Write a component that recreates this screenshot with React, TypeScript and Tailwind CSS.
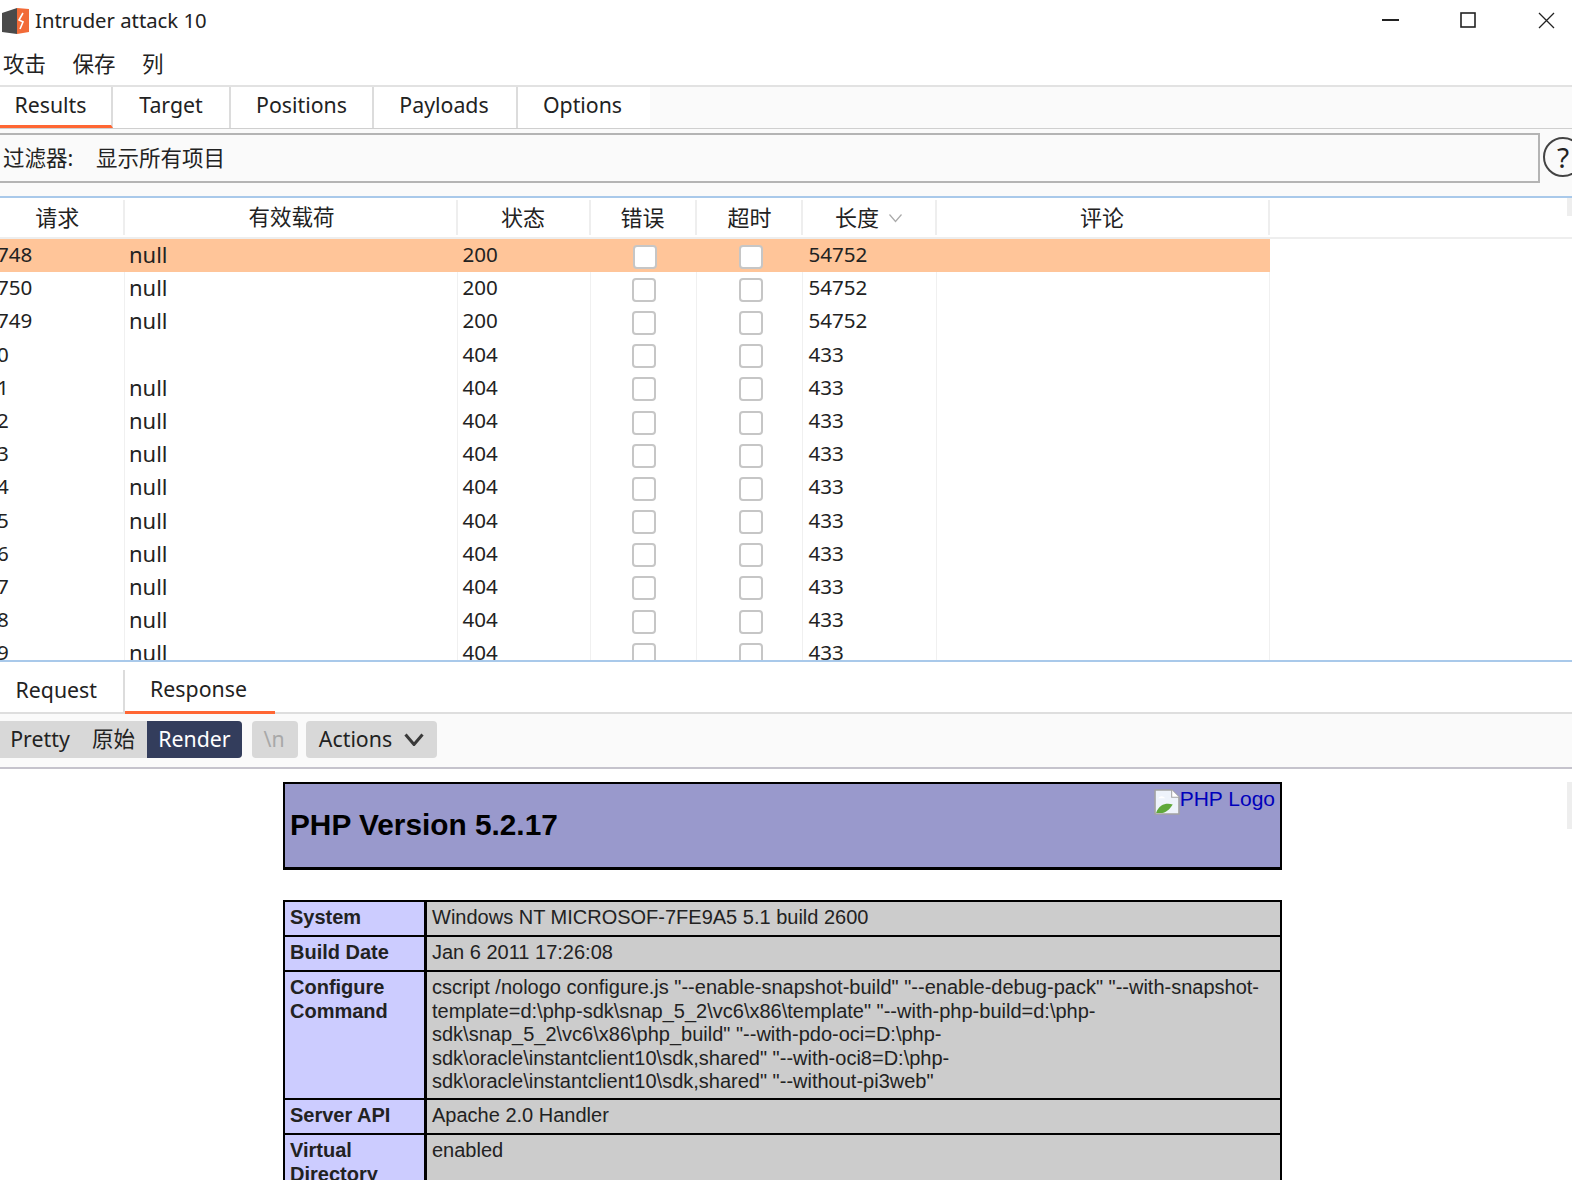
import React from 'react';

const sans = 'font-["Noto_Sans","Noto_Sans_CJK_SC",sans-serif]';
const COLS = 'grid grid-cols-[124.5px_333px_133px_106px_106px_134px_333px] w-[1269.5px]';

const rows = [
  { id: '748', payload: 'null', status: '200', len: '54752', active: true },
  { id: '750', payload: 'null', status: '200', len: '54752' },
  { id: '749', payload: 'null', status: '200', len: '54752' },
  { id: '0', payload: '', status: '404', len: '433' },
  { id: '1', payload: 'null', status: '404', len: '433' },
  { id: '2', payload: 'null', status: '404', len: '433' },
  { id: '3', payload: 'null', status: '404', len: '433' },
  { id: '4', payload: 'null', status: '404', len: '433' },
  { id: '5', payload: 'null', status: '404', len: '433' },
  { id: '6', payload: 'null', status: '404', len: '433' },
  { id: '7', payload: 'null', status: '404', len: '433' },
  { id: '8', payload: 'null', status: '404', len: '433' },
  { id: '9', payload: 'null', status: '404', len: '433' },
];

const AppLogo = () => (
  <svg width="30" height="28" viewBox="0 0 30 28">
    <path d="M2 6 L17 1 V27 L2 25 Z" fill="#4a4a4a" />
    <path d="M17 1 L29 2 V25 L17 27 Z" fill="#f26b38" />
    <path d="M23 6 L19 13 L23 15 L20 22" fill="none" stroke="#fff" strokeWidth="1.6" />
  </svg>
);

const BrokenImage = () => (
  <svg width="26" height="26" viewBox="0 0 25 25" className="shrink-0">
    <path d="M1 1 H17 L24 8 V24 H1 Z" fill="#eef3fb" stroke="#a3a3a3" strokeWidth="1.5" />
    <path d="M17 1 V8 H24" fill="#fff" stroke="#a3a3a3" />
    <path d="M2 23 C5 14 13 13 18 15 C15 20 11 23 8 23 Z" fill="#5fa83a" />
    <path d="M4 9 Q7 5 11 9 Z" fill="#fff" />
  </svg>
);

const Chevron = ({ w, h, stroke, color }: { w: number; h: number; stroke: number; color: string }) => (
  <svg width={w} height={h} viewBox={`0 0 ${w} ${h}`} fill="none" stroke={color} strokeWidth={stroke}>
    <path d={`M1.5 1.5 L${w / 2} ${h - 1.5} L${w - 1.5} 1.5`} />
  </svg>
);

const Check = () => (
  <div className="w-[24px] h-[24px] mt-[2px] rounded-[4px] bg-white border-2 border-[#c6c6c6]" />
);

const Tab = ({ label, width, active, extra }: { label: string; width: string; active?: boolean; extra?: string }) => (
  <div className={`${width} h-full flex items-center justify-center border-r-2 border-[#dcdcdc] bg-white ${extra ?? ''} ${active ? 'pb-[3px] border-b-[3px] border-b-[#ff6633]' : 'pb-[5px]'}`}>
    {label}
  </div>
);

const InfoRow = ({ label, height, children }: { label: React.ReactNode; height: string; children: React.ReactNode }) => (
  <div className={`flex ${height} border-b-[2px] border-black`}>
    <div className="w-[142px] shrink-0 bg-[#ccccff] border-r-[3px] border-black px-[5px] pt-[4px] font-bold leading-[23.5px]">{label}</div>
    <div className="flex-1 bg-[#cccccc] px-[5px] pt-[4px] leading-[23.5px]">{children}</div>
  </div>
);

export default function App() {
  return (
    <div className={`w-[1572px] h-[1180px] overflow-hidden bg-white text-[#222] text-[21.3px] ${sans}`}>
      {/* Title bar */}
      <div className="h-[42px] flex items-center">
        <AppLogo />
        <span className="ml-[5px] text-[20.3px] pb-[2px]">Intruder attack 10</span>
        <div className="ml-auto flex items-center pb-[2px]">
          <svg width="17" height="2" className="mr-[61px]"><rect width="17" height="2" fill="#222" /></svg>
          <svg width="16" height="16" className="mr-[62px]"><rect x="1" y="1" width="14" height="14" fill="none" stroke="#222" strokeWidth="1.6" /></svg>
          <svg width="17" height="17" className="mr-[17px]" stroke="#222" strokeWidth="1.3"><path d="M1 1 L16 16 M16 1 L1 16" /></svg>
        </div>
      </div>

      {/* Menu */}
      <div className="h-[43px] flex items-center pl-[3px] gap-[26.5px] text-[21.5px] pt-[1px]">
        <span>攻击</span>
        <span>保存</span>
        <span>列</span>
      </div>

      {/* Main tabs */}
      <div className="h-[44px] flex bg-[#fafafa] border-t-2 border-b border-t-[#e2e2e2] border-b-[#cfcfcf]">
        <Tab label="Results" width="w-[113px]" extra="pr-[10px]" active />
        <Tab label="Target" width="w-[118px]" />
        <Tab label="Positions" width="w-[143px]" />
        <Tab label="Payloads" width="w-[144px]" extra="pr-[2px]" />
        <div className="w-[132px] bg-white flex items-center justify-center pb-[5px] pr-[3px]">Options</div>
      </div>

      {/* Filter */}
      <div className="h-[69px] bg-[#fafafa] flex pt-[4px] border-b-2 border-b-[#a9c9ea]">
        <div className="w-[1540px] shrink-0 h-[50px] border-2 border-l-0 border-[#b4b4b4] flex items-center pl-[3px] text-[21.5px]">
          <span className="w-[93px]">过滤器:</span>
          <span>显示所有项目</span>
        </div>
        <div className="ml-[3px] mt-[4px] w-[40px] h-[40px] shrink-0 rounded-full border-2 border-[#444] flex items-center justify-center text-[28px] leading-none">?</div>
      </div>

      {/* Results table */}
      <div className="h-[464px] overflow-hidden border-b-2 border-b-[#a9c9ea]">
        <div className="h-[41px] flex border-b-2 border-[#eeeeee]">
          <div className={`${COLS} text-[22px]`}>
            <div className="flex items-center justify-center pr-[8px] border-r-2 border-[#eeeeee] my-[2px]">请求</div>
            <div className="flex items-center justify-center pl-[3px] text-[21.5px] border-r-2 border-[#eeeeee] my-[2px]">有效载荷</div>
            <div className="flex items-center justify-center border-r-2 border-[#eeeeee] my-[2px]">状态</div>
            <div className="flex items-center justify-center border-r-2 border-[#eeeeee] my-[2px]">错误</div>
            <div className="flex items-center justify-center pl-[2px] border-r-2 border-[#eeeeee] my-[2px]">超时</div>
            <div className="flex items-center justify-center gap-[9px] pl-[1px] border-r-2 border-[#eeeeee] my-[2px]">
              长度
              <Chevron w={15} h={10} stroke={1.2} color="#aaaaaa" />
            </div>
            <div className="flex items-center justify-center border-r-2 border-[#eeeeee] my-[2px]">评论</div>
          </div>
          <div className="ml-auto w-[5px] h-[18px] bg-[#eeeeee]" />
        </div>
        {rows.map(r => (
          <div key={r.id} className={`${COLS} h-[33.2px] leading-[31px] ${r.active ? 'bg-[#ffc599]' : ''}`}>
            <div className={`${r.active ? '' : 'border-r border-[#f0f0f0]'} -ml-[3px] w-[127.5px] text-[20.6px]`}>{r.id}</div>
            <div className={`${r.active ? '' : 'border-r border-[#f0f0f0]'} pl-[4.5px] text-[22px]`}>{r.payload}</div>
            <div className={`${r.active ? '' : 'border-r border-[#f0f0f0]'} pl-[5px] text-[20.6px]`}>{r.status}</div>
            <div className={`${r.active ? '' : 'border-r border-[#f0f0f0]'} flex items-center justify-center pl-[2px]`}><Check /></div>
            <div className={`${r.active ? '' : 'border-r border-[#f0f0f0]'} flex items-center justify-center pl-[3px]`}><Check /></div>
            <div className={`${r.active ? '' : 'border-r border-[#f0f0f0]'} pl-[6px] text-[20.6px]`}>{r.len}</div>
            <div className={r.active ? '' : 'border-r border-[#f0f0f0]'} />
          </div>
        ))}
      </div>

      {/* Request / Response tabs */}
      <div className="h-[52px] flex border-b-2 border-[#dedede]">
        <div className="w-[124.5px] flex items-center justify-center pr-[12px] pt-[5px] relative">
          Request
          <div className="absolute right-0 top-[8px] bottom-0 w-[2px] bg-[#dcdcdc]" />
        </div>
        <div className="w-[150px] flex items-center justify-center border-b-[3px] border-[#ff6633] -mb-[2px] pt-[5px] pr-[2px]">Response</div>
      </div>

      {/* Viewer toolbar */}
      <div className="h-[55px] bg-[#fafafa] border-b-2 border-[#c5c3cc] flex items-center pb-[3px]">
        <div className="h-[37px] flex bg-[#d8d8d8] rounded-r-[4px]">
          <span className="w-[80px] flex items-center justify-center">Pretty</span>
          <span className="w-[67px] flex items-center justify-center text-[21.5px]">原始</span>
          <span className="w-[95px] flex items-center justify-center bg-[#333d5c] text-white rounded-r-[4px]">Render</span>
        </div>
        <div className="ml-[10px] w-[46px] h-[37px] rounded-[4px] bg-[#d8d8d8] text-[#a8a8a8] flex items-center justify-center pr-[2px]">\n</div>
        <div className="ml-[8px] w-[131px] h-[37px] rounded-[4px] bg-[#d8d8d8] flex items-center justify-center gap-[12px]">
          Actions
          <Chevron w={20} h={13} stroke={3} color="#3a3a3a" />
        </div>
        <div className="ml-auto self-end -mb-[65px] w-[5px] h-[47px] bg-[#eeeeee]" />
      </div>

      {/* Rendered phpinfo page */}
      <div className="pl-[283px] pt-[13px] font-['Liberation_Sans',Arial,sans-serif] text-[20px] text-[#222]">
        <div className="w-[999px] h-[88px] bg-[#9999cc] border-2 border-black border-b-[3px] flex justify-between pl-[5px] pr-[5px]">
          <div className="self-center font-bold text-[29.8px] leading-none text-black pb-[2px]">PHP Version 5.2.17</div>
          <div className="flex items-start pt-[5px] text-[#0000bb] text-[21px] leading-none">
            <BrokenImage />
            <span className="-mt-[1px]">PHP Logo</span>
          </div>
        </div>

        <div className="mt-[30px] w-[999px] border-2 border-b-0 border-black">
          <InfoRow label="System" height="h-[35px]">Windows NT MICROSOF-7FE9A5 5.1 build 2600</InfoRow>
          <InfoRow label="Build Date" height="h-[35px]">Jan 6 2011 17:26:08</InfoRow>
          <InfoRow label={<>Configure<br />Command</>} height="h-[128px]">
            cscript /nologo configure.js "--enable-snapshot-build" "--enable-debug-pack" "--with-snapshot-<br />
            template=d:\php-sdk\snap_5_2\vc6\x86\template" "--with-php-build=d:\php-<br />
            sdk\snap_5_2\vc6\x86\php_build" "--with-pdo-oci=D:\php-<br />
            sdk\oracle\instantclient10\sdk,shared" "--with-oci8=D:\php-<br />
            sdk\oracle\instantclient10\sdk,shared" "--without-pi3web"
          </InfoRow>
          <InfoRow label="Server API" height="h-[35px]">Apache 2.0 Handler</InfoRow>
          <InfoRow label={<>Virtual<br />Directory</>} height="h-[60px]">enabled</InfoRow>
        </div>
      </div>
    </div>
  );
}
